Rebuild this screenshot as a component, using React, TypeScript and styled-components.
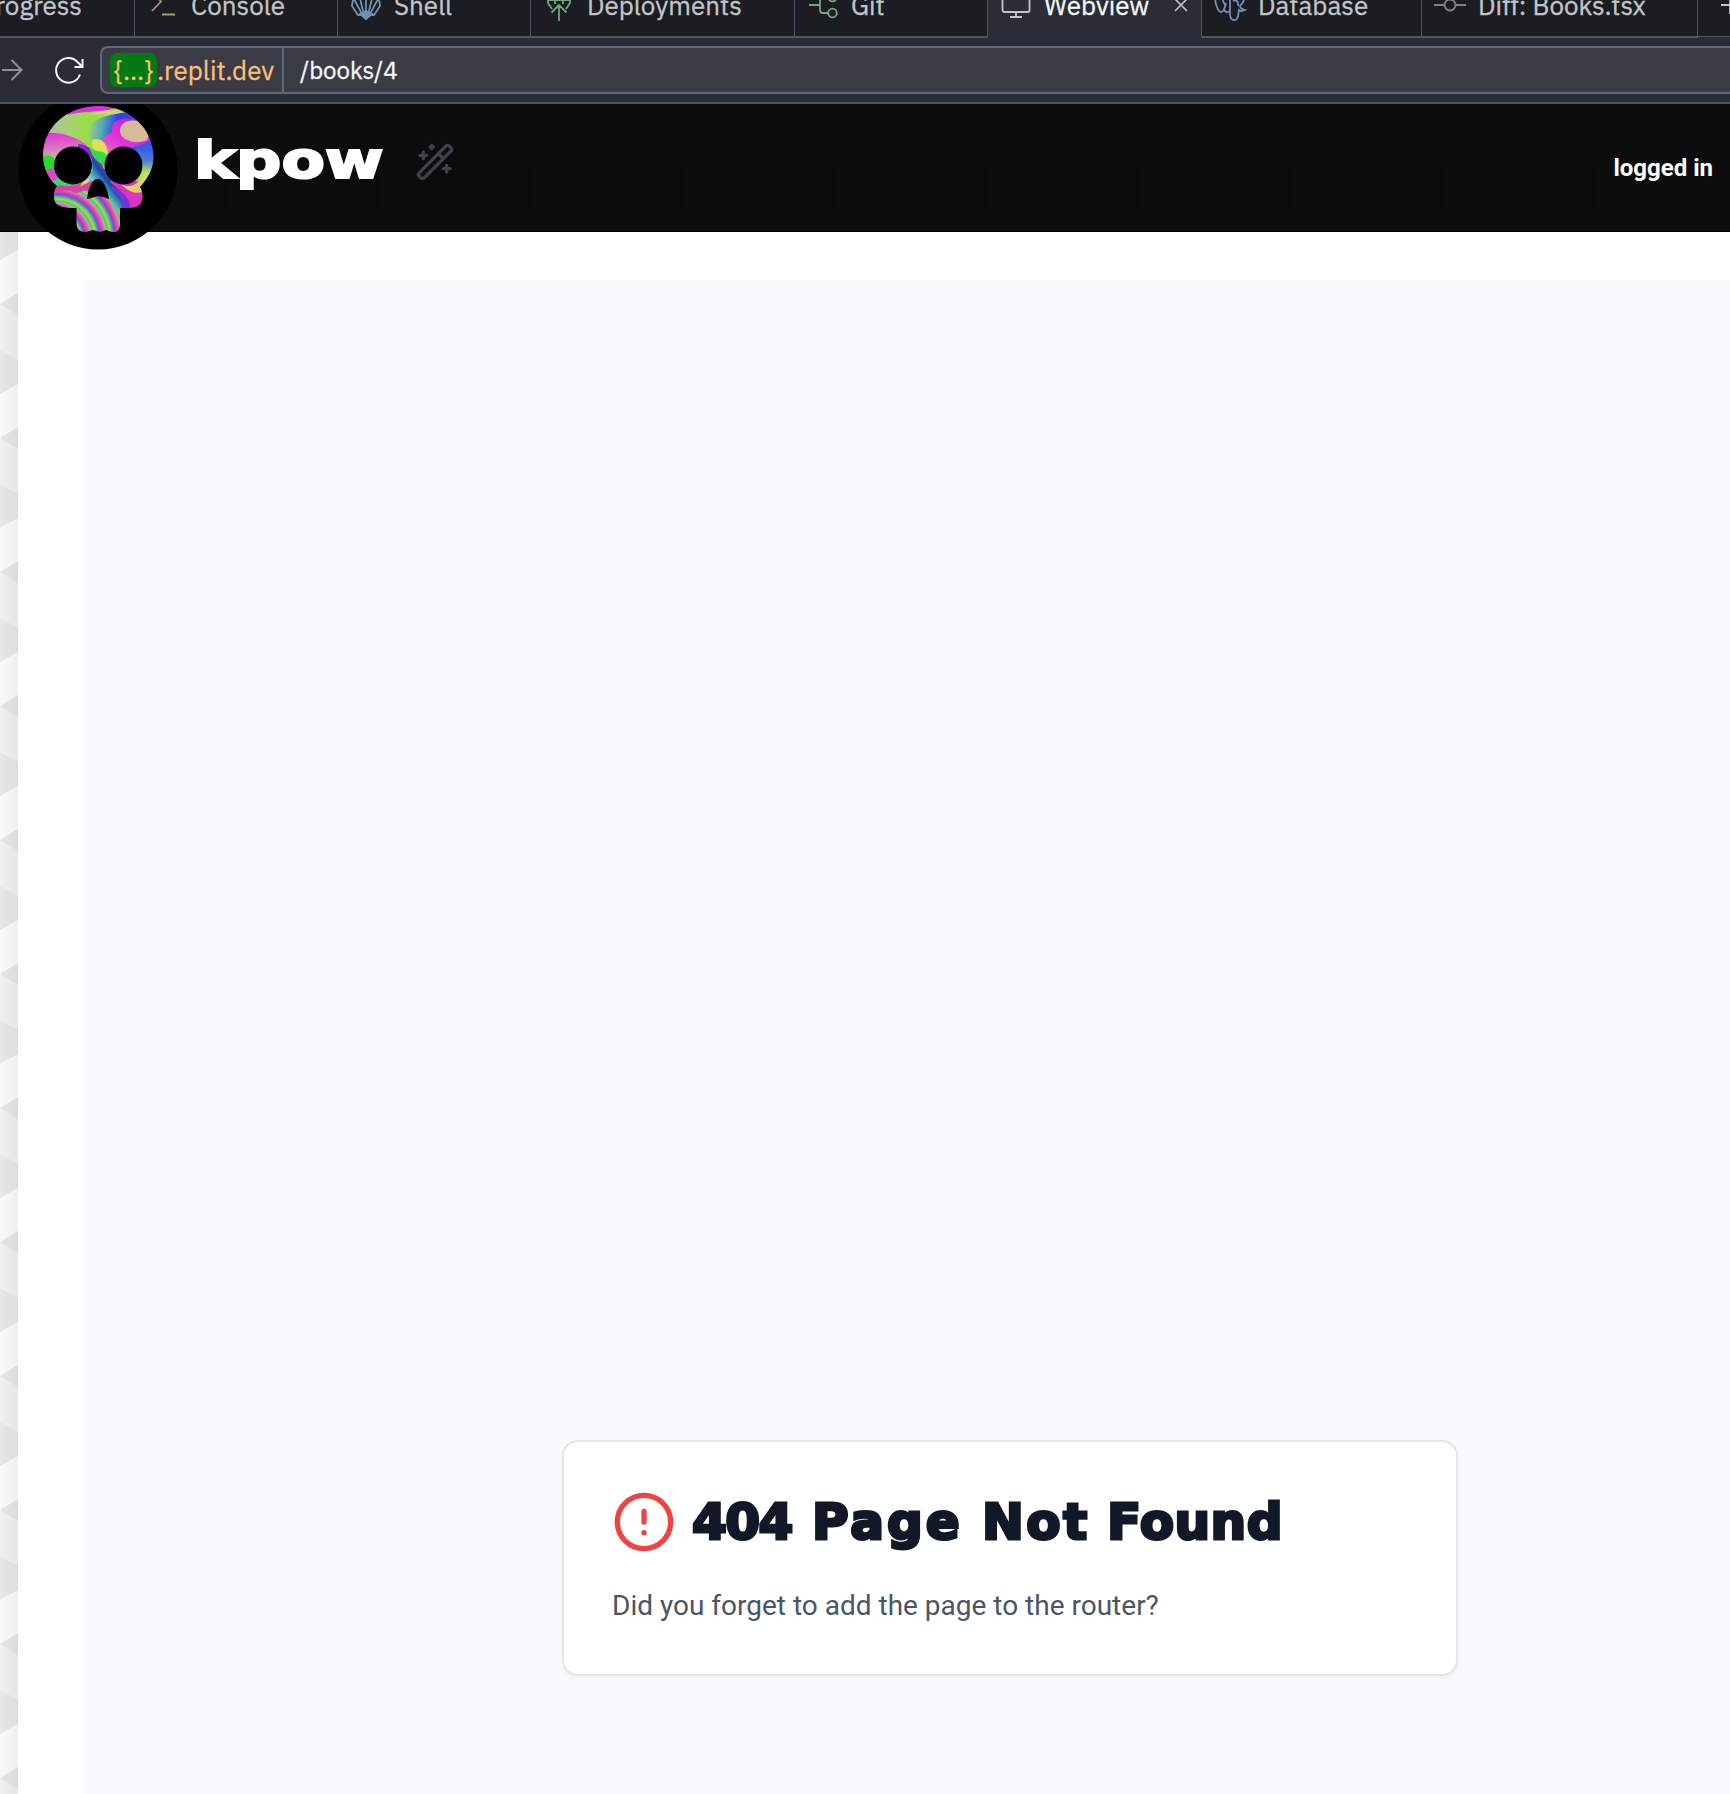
import React from "react";
import styled, { createGlobalStyle, css } from "styled-components";
import { CircleAlert, WandSparkles } from "lucide-react";

const GlobalStyle = createGlobalStyle`
  * { box-sizing: border-box; }
  html, body { margin: 0; height: 100%; background: #fff; overflow: hidden; }
  h1, p { margin: 0; }
`;

const uiFont = `"IBM Plex Sans", Inter, "Liberation Sans", sans-serif`;
const displayFont = `"DejaVu Sans", "Liberation Sans", sans-serif`;

const Screen = styled.div`
  width: 1730px;
  height: 1794px;
  overflow: hidden;
  display: flex;
  flex-direction: column;
  background: #fff;
`;

const Chrome = styled.div`
  position: relative;
  z-index: 2;
  flex: none;
  height: 104px;
  display: flex;
  flex-direction: column;
  background: #2b2d36;
  border-bottom: 2px solid #4e5569;
  overflow: hidden;
`;

const TabStrip = styled.div`
  flex: none;
  display: flex;
  height: 64px;
  margin-top: -26px;
`;

const Tab = styled.div<{ $width: number; $active?: boolean; $clipped?: boolean }>`
  flex: none;
  width: ${(p) => p.$width}px;
  height: 64px;
  padding: 0 12px;
  display: flex;
  align-items: center;
  gap: 12px;
  font: 400 26px/32px ${uiFont};
  color: #c2c5ca;
  -webkit-text-stroke: 0.3px currentColor;
  background: #1c1d22;
  border-right: 1px solid #4e5569;
  border-bottom: 2px solid #4e5569;
  white-space: nowrap;
  ${(p) =>
    p.$active &&
    css`
      background: #2b2d36;
      border-bottom-color: #2b2d36;
      color: #f5f9fc;
    `}
  ${(p) =>
    p.$clipped &&
    css`
      justify-content: flex-end;
      padding-right: 52px;
    `}
`;

const TabIcon = styled.svg<{ $color: string }>`
  flex: none;
  width: 32px;
  height: 32px;
  fill: none;
  stroke: ${(p) => p.$color};
  stroke-width: 1.8;
  overflow: visible;
`;

const CloseIcon = styled.svg`
  flex: none;
  width: 14px;
  height: 14px;
  margin: 0 1px 0 auto;
  fill: none;
  stroke: #c2c5ca;
  stroke-width: 1.6;
`;

const NewTab = styled.div`
  flex: 1;
  display: flex;
  align-items: center;
  padding-left: 23px;
  height: 63px;
  background: #1c1d22;
  border-bottom: 1px solid #4e5569;
`;

const Toolbar = styled.div`
  flex: 1;
  display: flex;
  align-items: center;
`;

const NavIcon = styled.svg<{ $color: string; $left: number; $size: number }>`
  flex: none;
  width: ${(p) => p.$size}px;
  height: 32px;
  margin-left: ${(p) => p.$left}px;
  fill: none;
  stroke: ${(p) => p.$color};
  stroke-width: 2;
`;

const AddressBar = styled.div`
  flex: 1;
  height: 48px;
  margin-left: 15px;
  display: flex;
  background: #3a3c45;
  border: 2px solid #5f677c;
  border-right: 0;
  border-radius: 8px 0 0 8px;
  font: 400 24px/44px ${uiFont};
  color: #f5f9fc;
  -webkit-text-stroke: 0.3px currentColor;
  white-space: nowrap;
`;

const Host = styled.div`
  flex: none;
  width: 182px;
  display: flex;
  align-items: center;
  padding-left: 8px;
  font-size: 26px;
  color: #ffbd7a;
  border-right: 2px solid #5f677c;
`;

const Subdomain = styled.span`
  width: 47px;
  height: 34px;
  border-radius: 7px;
  line-height: 34px;
  text-align: center;
  background: #047a12;
`;

const Path = styled.div`
  padding-left: 16px;
`;

const Header = styled.header`
  position: relative;
  z-index: 1;
  flex: none;
  height: 128px;
  display: flex;
  align-items: center;
  background: #0c0c0c;
  border-bottom: 1px solid #040404;
`;

const HeaderPattern = styled.svg`
  position: absolute;
  inset: 0;
  width: 100%;
  height: 100%;
`;

const Logo = styled.svg`
  position: relative;
  flex: none;
  width: 160px;
  height: 160px;
  margin: 4px 0 0 18px;
`;

const Brand = styled.div`
  position: relative;
  margin: 0 0 16px 16px;
  width: 203px;
  font: 700 60px/70px ${displayFont};
  color: #fff;
  -webkit-text-stroke: 2.5px #fff;
  transform: scale(1.055, 0.87);
  transform-origin: left center;
`;

const WandButton = styled.div`
  position: relative;
  display: flex;
  margin: 0 0 12px 18px;
  color: #3d424b;
`;

const Account = styled.div`
  position: relative;
  margin-left: auto;
  padding: 0 17px 0 0;
  font: 700 24px/32px Roboto, sans-serif;
  color: #fff;
`;

const Body = styled.div`
  flex: 1;
  display: flex;
  min-height: 0;
`;

const Backdrop = styled.svg`
  flex: none;
  width: 18px;
  height: 1562px;
`;

const Page = styled.main`
  flex: 1;
  padding: 48px 0 0 64px;
  display: flex;
  background: #fff;
`;

const Panel = styled.section`
  flex: 1;
  padding: 1160px 0 0 480px;
  background: #f9fafb;
`;

const Card = styled.article`
  width: 896px;
  height: 236px;
  padding: 48px;
  background: #fff;
  border: 2px solid #e5e5e5;
  border-radius: 16px;
  box-shadow: 0 2px 4px rgba(0, 0, 0, 0.05);
`;

const TitleRow = styled.div`
  display: flex;
  align-items: center;
  height: 64px;
  gap: 16px;
  margin-bottom: 32px;
  color: #ef4444;
`;

const Title = styled.h1`
  display: flex;
  font: 700 50px/64px ${displayFont};
  color: #111827;
  -webkit-text-stroke: 3px #111827;
  white-space: pre;
`;

const Word = styled.span<{ $width: number; $spacing: number }>`
  width: ${(p) => p.$width}px;
  letter-spacing: ${(p) => p.$spacing}px;
`;

const Message = styled.p`
  font: 400 28px/40px Roboto, sans-serif;
  color: #4b5563;
`;

const facets = Array.from({ length: 13 }, (_, i) => i * 134 - 62);

function SkullLogo() {
  return (
    <Logo viewBox="18 -5 160 160">
      <defs>
        <clipPath id="skull">
          <path d="M57 91C48 84 43 72 43 61C43 32 67 11 98 11C130 11 153.500 34 153.500 62C153.500 75 147 84 140 92C143 97 143.500 103 141 108C138 113 130 113.500 120 113V128C120 136 117 137.500 112 137L106 135L100 137L93 135L86 137C79 137 76.500 134 76.500 127V113C66 113.500 58 112 55 107C53 101 54 95 57 91Z" />
        </clipPath>
        <filter id="soften" x="-10%" y="-10%" width="120%" height="120%">
          <feGaussianBlur stdDeviation="0.6" />
        </filter>
        <linearGradient id="lime" x1="0" x2="1">
          <stop offset="0" stopColor="#b7b2b1" />
          <stop offset="0.25" stopColor="#a5d276" />
          <stop offset="0.45" stopColor="#95e236" />
          <stop offset="0.65" stopColor="#c5e03c" />
          <stop offset="1" stopColor="#58d86b" />
        </linearGradient>
        <linearGradient id="pink" x1="0" y1="0" x2="0.1" y2="1">
          <stop offset="0" stopColor="#e32fda" />
          <stop offset="0.35" stopColor="#dc68c4" />
          <stop offset="0.7" stopColor="#c3b5ad" />
          <stop offset="1" stopColor="#49cdb0" />
        </linearGradient>
        <linearGradient id="pool" x1="0" x2="1" y2="0.1">
          <stop offset="0" stopColor="#a7dc79" />
          <stop offset="0.22" stopColor="#54a9b5" />
          <stop offset="0.42" stopColor="#2743e9" />
          <stop offset="1" stopColor="#3558ec" />
        </linearGradient>
        <linearGradient id="orchid" x1="0" x2="1" y1="1" y2="0">
          <stop offset="0" stopColor="#db91a5" />
          <stop offset="0.4" stopColor="#e233dc" />
          <stop offset="1" stopColor="#a91ebc" />
        </linearGradient>
        <linearGradient id="right" x1="0" x2="0" y1="0" y2="1">
          <stop offset="0" stopColor="#2642e6" />
          <stop offset="0.5" stopColor="#4b7ad9" />
          <stop offset="0.75" stopColor="#bfe550" />
          <stop offset="1" stopColor="#dfbe83" />
        </linearGradient>
        <linearGradient id="bridge" gradientUnits="userSpaceOnUse" x1="121" y1="75" x2="84" y2="104">
          <stop offset="0" stopColor="#e12bc5" />
          <stop offset="0.18" stopColor="#803fe0" />
          <stop offset="0.36" stopColor="#15499d" />
          <stop offset="0.57" stopColor="#59bad1" />
          <stop offset="0.74" stopColor="#e1dda0" />
          <stop offset="0.85" stopColor="#d8c227" />
          <stop offset="1" stopColor="#df39ca" />
        </linearGradient>
        <radialGradient id="rings" gradientUnits="userSpaceOnUse" cx="56" cy="143" r="15" spreadMethod="repeat">
          <stop offset="0" stopColor="#e229a8" />
          <stop offset="0.18" stopColor="#d85fae" />
          <stop offset="0.36" stopColor="#b4a5c2" />
          <stop offset="0.46" stopColor="#27e052" />
          <stop offset="0.6" stopColor="#a3e32c" />
          <stop offset="0.7" stopColor="#d49c68" />
          <stop offset="0.78" stopColor="#22b9cd" />
          <stop offset="0.9" stopColor="#4a69d9" />
          <stop offset="1" stopColor="#e229a8" />
        </radialGradient>
      </defs>
      <circle cx="98" cy="75" r="79.500" fill="#000" />
      <g clipPath="url(#skull)">
        <g filter="url(#soften)">
          <rect x="40" y="5" width="118" height="138" fill="url(#lime)" />
          <path d="M68 20C80 16 96 18 118 13L98 5L68 12Z" fill="#e12de1" />
          <path d="M84 21C96 17 108 15 122 16L130 20C112 17 98 19 84 21Z" fill="#dfc99d" />
          <path d="M91 44C86 29 93 23 116 19L160 10V62H122C113 48 103 44 91 44Z" fill="url(#pool)" />
          <path d="M116 17C128 17 137 20 146 29L150 18L120 7Z" fill="#b1e63c" />
          <path d="M105 61C98 50 101 42 112 37C110 26 120 22 132 24C144 26 151 37 152 48C140 53 120 51 106 65Z" fill="url(#orchid)" />
          <path d="M120 36C120 28 128 24 137 26C145 29 151 39 147 45C138 50 120 46 120 36Z" fill="#d6ba9b" />
          <path d="M40 38C65 36 83 43 94 58L103 76L92 75L80 62C67 54 57 60 40 68Z" fill="url(#pink)" />
          <path d="M78 49C88 48 101 61 104 75L99 75C92 63 87 57 78 54Z" fill="#8c24d5" />
          <path d="M92 46C100 40 110 50 107 61C97 59 91 54 92 46Z" fill="#dfdf59" />
          <path d="M89 51C95 59 105 54 107 61L105 71C98 68 91 61 89 51Z" fill="#31dc4f" />
          <path d="M134 51C142 51 150 47 160 40V87L137 91L144 72Z" fill="url(#right)" />
          <path d="M40 62C48 59 54 61 56 66L53 77H40Z" fill="#27dc27" />
          <path d="M44 75L54 73L61 87L50 91Z" fill="#d74cc5" />
          <path d="M50 88L58 83L65 89H92V96H52Z" fill="#32da68" />
          <path d="M48 99C60 89 78 94 92 86L124 96L137 145H48Z" fill="url(#rings)" />
          <path d="M60 90C70 93 81 91 93 78L91 94L76 98C66 93 59 96 52 101L54 92Z" fill="#d941aa" />
          <path d="M91 61L104 74L146 90V118H120L106 96L94 84L80 92L84 82L93 75Z" fill="url(#bridge)" />
          <path d="M114 82C129 91 142 91 147 104L142 118H126C131 106 125 99 110 87Z" fill="#df30bd" />
          <path d="M121 89C132 95 140 87 145 78L147 96C138 99 130 99 121 89Z" fill="#dfd268" />
          <path d="M112 95C120 100 124 106 121 116L130 116C132 104 124 98 112 91Z" fill="#6d38e0" />
        </g>
      </g>
      <circle cx="73" cy="70.500" r="19" fill="#000" />
      <circle cx="123.500" cy="70.500" r="19" fill="#000" />
      <path d="M87 104C88 95 91 86 96 84H99C104 86 108 95 109 104L105 102.500L98 101L91 103Z" fill="#000" />
    </Logo>
  );
}

export default function App() {
  return (
    <>
      <GlobalStyle />
      <Screen>
        <Chrome>
          <TabStrip>
            <Tab $width={135} $clipped>
              <span>Progress</span>
            </Tab>
            <Tab $width={203}>
              <TabIcon $color="#a99a6b" viewBox="0 0 32 32">
                <path d="M5 3l9 9.500-9 9.500M15 25.500h13" />
              </TabIcon>
              <span>Console</span>
            </Tab>
            <Tab $width={193}>
              <TabIcon $color="#6f8fb4" viewBox="0 0 32 32">
                <path d="M16 29l-4-3H8L2 17c0-6 3-9 6-11l8-3 8 3c3 2 6 5 6 11l-6 9h-4l-4 3zM16 27V3M14 26L9 5M18 26l5-21M12 25L4 10M20 25l8-15" />
                <path d="M10 25l6-3 6 3-6 5z" fill="#6f8fb4" />
              </TabIcon>
              <span>Shell</span>
            </Tab>
            <Tab $width={264}>
              <TabIcon $color="#72a77d" viewBox="0 0 32 32">
                <path d="M16 32V16M8.500 23.500L16 16l7.500 7.500M9 20l-4-6v-3h22v3l-4 6M12 15v-4M20 15v-4" />
              </TabIcon>
              <span>Deployments</span>
            </Tab>
            <Tab $width={193}>
              <TabIcon $color="#72a77d" viewBox="0 0 32 32">
                <path d="M2 16h11M21 8h-5a3 3 0 0 0-3 3v10a3 3 0 0 0 3 3h5" />
                <circle cx="25.500" cy="8" r="4.300" />
                <circle cx="25.500" cy="24" r="4.300" />
              </TabIcon>
              <span>Git</span>
            </Tab>
            <Tab $width={214} $active>
              <TabIcon $color="#c2c5ca" viewBox="0 0 32 32">
                <rect x="2.500" y="3" width="27" height="20" rx="2" />
                <path d="M16 23v5M10 28h12" />
              </TabIcon>
              <span>Webview</span>
              <CloseIcon viewBox="0 0 14 14">
                <path d="M1 1l12 12M13 1L1 13" />
              </CloseIcon>
            </Tab>
            <Tab $width={220}>
              <TabIcon $color="#6f8fb4" viewBox="0 0 32 32">
                <path d="M1 7c0 8 3 16 6 16 3 0 4-5 5-9M10 20c1 4 5 4 6 1M9 8c-1 6 2 5 2 9M16 10v14c0 9 7 9 8 3l1-6c2 2 4 1 6 0-4-1-5-2-5-4 3-3 5-8 5-11M19 12c3-2 6 1 5 5" />
              </TabIcon>
              <span>Database</span>
            </Tab>
            <Tab $width={276}>
              <TabIcon $color="#80858c" viewBox="0 0 32 32">
                <circle cx="16" cy="16" r="5.500" />
                <path d="M0 16h10.500M21.500 16H32" />
              </TabIcon>
              <span>Diff: Books.tsx</span>
            </Tab>
            <NewTab>
              <TabIcon $color="#c2c5ca" viewBox="0 0 32 32">
                <path d="M0 16h18M9 7v18" />
              </TabIcon>
            </NewTab>
          </TabStrip>
          <Toolbar>
            <NavIcon $color="#8d9198" $left={0} $size={24} viewBox="0 0 24 32">
              <path d="M2 16h19M11.500 6L21.500 16l-10 10" />
            </NavIcon>
            <NavIcon $color="#f5f9fc" $left={29} $size={32} viewBox="0 0 32 32">
              <path d="M27 20.500A12.300 12.300 0 1 1 24.500 8l4.500 4.500M29.500 5v8H21.500" />
            </NavIcon>
            <AddressBar>
              <Host>
                <Subdomain>{"{...}"}</Subdomain>
                <span>.replit.dev</span>
              </Host>
              <Path>/books/4</Path>
            </AddressBar>
          </Toolbar>
        </Chrome>

        <Header>
          <HeaderPattern>
            <defs>
              <pattern id="cubes" width="152" height="132" patternUnits="userSpaceOnUse">
                <path d="M0 22L38 0v44L0 66zM76 66l38-22v66H76zM114 0l38 22v22l-38 22z" fill="#0d0d0d" />
              </pattern>
            </defs>
            <rect width="1730" height="112" fill="url(#cubes)" />
          </HeaderPattern>
          <SkullLogo />
          <Brand>kpow</Brand>
          <WandButton>
            <WandSparkles size={40} />
          </WandButton>
          <Account>logged in</Account>
        </Header>

        <Body>
          <Backdrop viewBox="0 0 18 1562">
            <defs>
              <linearGradient id="edge">
                <stop offset="0" stopColor="#000" stopOpacity="0" />
                <stop offset="1" stopColor="#000" stopOpacity="0.045" />
              </linearGradient>
            </defs>
            <rect width="18" height="1562" fill="#f0f0f0" />
            {facets.map((y) => (
              <g key={y} transform={`translate(0 ${y})`}>
                <path d="M0 0L18 -11V11z" fill="#e6e6e6" />
                <path d="M0 46l18 10v24L0 90z" fill="#e7e7e7" />
                <path d="M0 90l18-10v43L0 134z" fill="#fafafa" />
              </g>
            ))}
            <rect width="18" height="1562" fill="url(#edge)" />
          </Backdrop>
          <Page>
            <Panel>
              <Card>
                <TitleRow>
                  <CircleAlert size={64} />
                  <Title>
                    <Word $width={120} $spacing={-1.5}>404 </Word>
                    <Word $width={170} $spacing={3}>Page </Word>
                    <Word $width={125} $spacing={2.5}>Not </Word>
                    <Word $width={180} $spacing={0.5}>Found</Word>
                  </Title>
                </TitleRow>
                <Message>Did you forget to add the page to the router?</Message>
              </Card>
            </Panel>
          </Page>
        </Body>
      </Screen>
    </>
  );
}
